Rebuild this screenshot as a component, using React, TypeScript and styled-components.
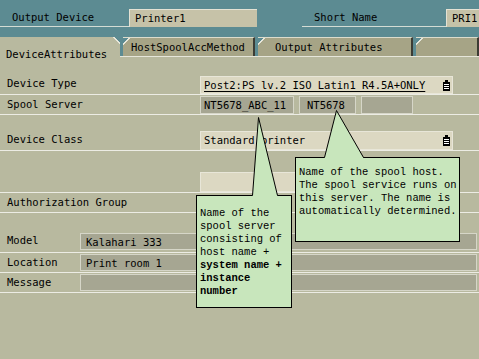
import React from "react";
import styled, { createGlobalStyle, css } from "styled-components";

const GlobalStyle = createGlobalStyle`
  html, body {
    margin: 0;
    padding: 0;
    background: #b8b99f;
  }
  body {
    font-family: "DejaVu Sans Mono", monospace;
    font-size: 10.5px;
    color: #000;
  }
`;

const Page = styled.div`
  position: relative;
  width: 479px;
  height: 359px;
  overflow: hidden;
  background: #b8b99f;
`;

const Header = styled.div`
  background: #5c8b92;
  padding-top: 9px;
  height: 37px;
  box-sizing: border-box;
`;

const HeaderRow = styled.div`
  display: flex;
  height: 18px;
`;

const HeadLabel = styled.div<{ $w: number; $pad: number; $gap?: number }>`
  width: ${p => p.$w}px;
  margin-left: ${p => p.$gap ?? 0}px;
  padding-left: ${p => p.$pad}px;
  box-sizing: border-box;
  line-height: 17px;
  border-bottom: 1px solid #d4dcd4;
  color: #000;
`;

const HeadField = styled.div<{ $w?: number }>`
  ${p => (p.$w ? `width: ${p.$w}px;` : "flex: 1;")}
  box-sizing: border-box;
  background: #c6c2a8;
  border-top: 1px solid #e4e2d4;
  border-left: 1px solid #e4e2d4;
  padding-left: 5px;
  line-height: 17px;
`;

const TabStrip = styled.div`
  display: flex;
  height: 19px;
  background: #5c8b92;
  gap: 3px;
`;

const Tab = styled.div<{ $w?: number; $active?: boolean }>`
  ${p => (p.$w ? `width: ${p.$w}px;` : "flex: 1;")}
  box-sizing: border-box;
  height: 19px;
  line-height: 18px;
  white-space: nowrap;
  ${p =>
    p.$active
      ? css`
          position: relative;
          z-index: 1;
          height: 25px;
          padding: 8px 0 0 6px;
          background: linear-gradient(
            225deg,
            transparent 4px,
            #e6e6da 4px,
            #e6e6da 5px,
            #b8b99f 5px
          );
        `
      : css`
          background: linear-gradient(
            135deg,
            transparent 4px,
            #e6e6da 4px,
            #e6e6da 5px,
            #a6a486 5px
          );
          border-top: 1px solid #dcdccc;
          border-right: 2px solid #3c3c34;
        `}
`;

const TabLabel = styled.span<{ $pad: number }>`
  padding-left: ${p => p.$pad}px;
`;

const Content = styled.div`
  position: relative;
  border-top: 1px solid #e6e6da;
  padding-top: 17px;
`;

const FormRow = styled.div<{ $h: number; $mt?: number }>`
  display: flex;
  align-items: flex-end;
  height: ${p => p.$h}px;
  margin-top: ${p => p.$mt ?? 0}px;
  border-bottom: 1px solid #ecece4;
  gap: 5px;
`;

const Label = styled.div<{ $w: number; $dy?: number }>`
  align-self: center;
  width: ${p => p.$w}px;
  padding-left: 7px;
  box-sizing: border-box;
  margin-right: -5px;
  margin-top: ${p => p.$dy ?? -2}px;
  white-space: nowrap;
`;

const Field = styled.div<{
  $w?: number;
  $tone: "light" | "gray";
  $h?: number;
  $pad?: number;
  $mb?: number;
}>`
  position: relative;
  ${p => (p.$w ? `width: ${p.$w}px;` : "flex: 1; margin-right: 2px;")}
  height: ${p => p.$h ?? 18}px;
  margin-bottom: ${p => p.$mb ?? 0}px;
  box-sizing: border-box;
  padding-left: ${p => p.$pad ?? 3}px;
  line-height: 16px;
  white-space: pre;
  background: ${p => (p.$tone === "light" ? "#dcd8c2" : "#a6a692")};
  border: 1px solid ${p => (p.$tone === "light" ? "#e8e6d8" : "#d6d6c8")};
`;

const Underlined = styled.span`
  text-decoration: underline;
  text-underline-offset: 2px;
`;

const DropIcon = styled.svg`
  position: absolute;
  right: 2px;
  top: 3px;
`;

const Tooltip = styled.div<{ $x: number; $y: number; $w: number; $h: number; $pt: number }>`
  position: absolute;
  left: ${p => p.$x}px;
  top: ${p => p.$y}px;
  width: ${p => p.$w}px;
  height: ${p => p.$h}px;
  box-sizing: border-box;
  padding: ${p => p.$pt}px 0 0 3px;
  background: #c8e6bc;
  border: 1px solid #000;
  font-family: "Liberation Mono", "DejaVu Sans Mono", monospace;
  font-size: 10.5px;
  line-height: 13px;
  z-index: 3;
`;

const TipLine = styled.div<{ $bold?: boolean }>`
  font-weight: ${p => (p.$bold ? 700 : 400)};
  white-space: nowrap;
`;

const Pointer = styled.svg`
  position: absolute;
  left: 0;
  top: 0;
  z-index: 4;
  pointer-events: none;
`;

const Dropdown = () => (
  <DropIcon width="7" height="11" viewBox="0 0 7 11">
    <rect x="2" y="0" width="3" height="2" fill="#000" />
    <rect x="0" y="2" width="7" height="9" fill="#000" />
    <rect x="1" y="4" width="5" height="1" fill="#fff" />
    <rect x="1" y="6" width="5" height="1" fill="#fff" />
    <rect x="1" y="8" width="5" height="1" fill="#fff" />
  </DropIcon>
);

const App = () => {
  return (
    <Page>
      <GlobalStyle />
      <Header>
        <HeaderRow>
          <HeadLabel $w={129} $pad={12}>
            Output Device
          </HeadLabel>
          <HeadField $w={128}>Printer1</HeadField>
          <HeadLabel $w={144} $pad={12} $gap={45}>
            Short Name
          </HeadLabel>
          <HeadField>PRI1</HeadField>
        </HeaderRow>
      </Header>
      <TabStrip>
        <Tab $w={120} $active>
          DeviceAttributes
        </Tab>
        <Tab $w={132}>
          <TabLabel $pad={8}>HostSpoolAccMethod</TabLabel>
        </Tab>
        <Tab $w={155}>
          <TabLabel $pad={17}>Output Attributes</TabLabel>
        </Tab>
        <Tab />
      </TabStrip>
      <Content>
        <FormRow $h={20}>
          <Label $w={200}>Device Type</Label>
          <Field $w={253} $tone="light">
            <Underlined>Post2:PS lv.2 ISO Latin1 R4.5A+ONLY</Underlined>
            <Dropdown />
          </Field>
        </FormRow>
        <FormRow $h={19}>
          <Label $w={200}>Spool Server</Label>
          <Field $w={94} $tone="gray">
            NT5678_ABC_11
          </Field>
          <Field $w={57} $tone="gray" $pad={7}>
            NT5678
          </Field>
          <Field $w={52} $tone="gray" />
        </FormRow>
        <FormRow $h={20} $mt={15}>
          <Label $w={200}>Device Class</Label>
          <Field $w={253} $tone="light" $h={19}>
            Standard printer
            <Dropdown />
          </Field>
        </FormRow>
        <FormRow $h={41}>
          <Label $w={200} />
          <Field $w={253} $tone="light" $h={20} />
        </FormRow>
        <FormRow $h={19}>
          <Label $w={200}>Authorization Group</Label>
        </FormRow>
        <FormRow $h={19} $mt={20}>
          <Label $w={80} $dy={-6}>
            Model
          </Label>
          <Field $tone="gray" $h={17} $pad={5} $mb={2}>
            Kalahari 333
          </Field>
        </FormRow>
        <FormRow $h={19}>
          <Label $w={80}>Location</Label>
          <Field $tone="gray" $h={17} $pad={5} $mb={1}>
            Print room 1
          </Field>
        </FormRow>
        <FormRow $h={19}>
          <Label $w={80}>Message</Label>
          <Field $tone="gray" $h={17} $mb={1} />
        </FormRow>
      </Content>

      <Tooltip $x={295} $y={157} $w={165} $h={85} $pt={8}>
        <TipLine>Name of the spool host.</TipLine>
        <TipLine>The spool service runs on</TipLine>
        <TipLine>this server. The name is</TipLine>
        <TipLine>automatically determined.</TipLine>
      </Tooltip>
      <Tooltip $x={196} $y={195} $w={96} $h={113} $pt={11}>
        <TipLine>Name of the</TipLine>
        <TipLine>spool server</TipLine>
        <TipLine>consisting of</TipLine>
        <TipLine>host name +</TipLine>
        <TipLine $bold>system name +</TipLine>
        <TipLine $bold>instance</TipLine>
        <TipLine $bold>number</TipLine>
      </Tooltip>
      <Pointer width="479" height="359" viewBox="0 0 479 359">
        <polygon points="324.5,158 336.5,110.5 363.5,158" fill="#c8e6bc" />
        <polyline
          points="324.5,157.5 336.5,110.5 363.5,157.5"
          fill="none"
          stroke="#000"
          strokeWidth="1"
        />
        <polygon points="252.5,196 258.5,117.5 277.5,196" fill="#c8e6bc" />
        <polyline
          points="252.5,195.5 258.5,117.5 277.5,195.5"
          fill="none"
          stroke="#000"
          strokeWidth="1"
        />
      </Pointer>
    </Page>
  );
};

export default App;
